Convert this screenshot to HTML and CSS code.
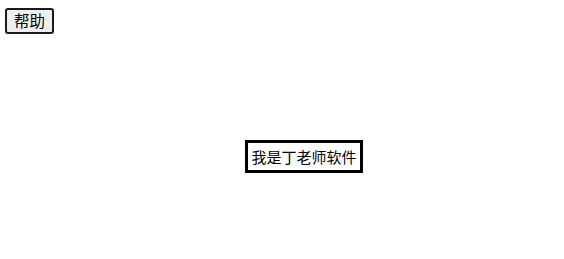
FILE: index.html
```html
<!DOCTYPE html>
<html>
<head>
<meta charset="utf-8">
<link rel="stylesheet" href="styles.css">
</head>
<body>
<div class="top"><button class="help">帮助</button></div>
<div class="stage"><div class="box">我是丁老师软件</div></div>
</body>
</html>
```
FILE: styles.css
```css
html, body { margin: 0; padding: 0; background: #fff; }
body { font-family: "Noto Sans CJK SC", sans-serif; }
.top { padding: 8px 0 0 5px; height: 26px; }
.help {
  box-sizing: border-box;
  width: 49px; height: 26px;
  padding: 0;
  border: 2px solid #1a1a1a;
  border-radius: 3px;
  background: #efefef;
  font-family: "Noto Sans CJK SC", sans-serif;
  font-size: 15.5px;
  line-height: 1;
  color: #000;
}
.stage { padding: 106px 0 0 245px; }
.box {
  box-sizing: border-box;
  width: 118px; height: 33px;
  border: 3px solid #000;
  display: flex; align-items: center; justify-content: center;
  font-size: 15px;
  line-height: 1;
  color: #000;
}
```
